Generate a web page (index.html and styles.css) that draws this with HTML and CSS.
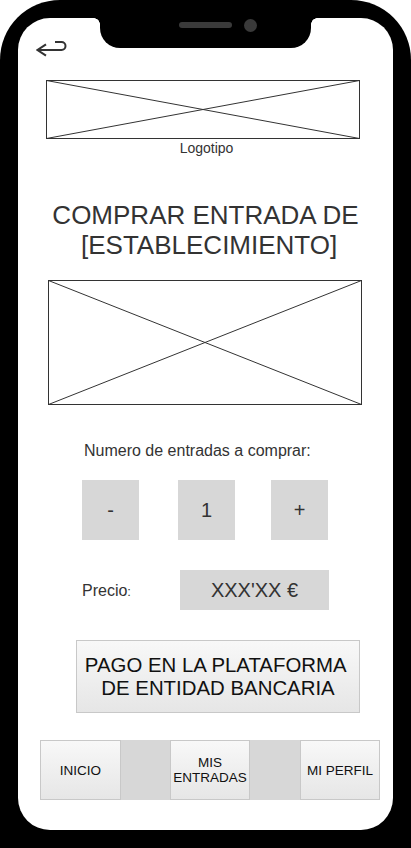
FILE: index.html
```html
<!DOCTYPE html>
<html lang="es">
<head>
<meta charset="utf-8">
<title>Comprar entrada</title>
<link rel="stylesheet" href="styles.css">
</head>
<body>
<div class="phone">
  <div class="notch"><span class="speaker"></span><span class="camera"></span></div>
  <div class="screen">
    <div class="topbar">
      <svg class="back" width="32" height="20" viewBox="36 39 32 20">
        <path d="M55 42 H61.5 A4 4 0 0 1 61.5 50 H37.5 M46 44.3 L37.5 50 L46 55.7" fill="none" stroke="#333" stroke-width="2" stroke-linejoin="miter"/>
      </svg>
    </div>
    <svg class="logo" width="314" height="59" viewBox="0 0 314 59">
      <rect x="0.5" y="0.5" width="313" height="58" fill="#fff" stroke="#333" stroke-width="1"/>
      <line x1="0.5" y1="0.5" x2="313.5" y2="58.5" stroke="#333" stroke-width="1"/>
      <line x1="313.5" y1="0.5" x2="0.5" y2="58.5" stroke="#333" stroke-width="1"/>
    </svg>
    <div class="logo-caption">Logotipo</div>
    <h1 class="title">COMPRAR ENTRADA DE<br> [ESTABLECIMIENTO]</h1>
    <svg class="picture" width="314" height="125" viewBox="0 0 314 125">
      <rect x="0.5" y="0.5" width="313" height="124" fill="#fff" stroke="#333" stroke-width="1"/>
      <line x1="0.5" y1="0.5" x2="313.5" y2="124.5" stroke="#333" stroke-width="1"/>
      <line x1="313.5" y1="0.5" x2="0.5" y2="124.5" stroke="#333" stroke-width="1"/>
    </svg>
    <p class="label">Numero de entradas a comprar:</p>
    <div class="counter">
      <div class="cbox c1">-</div>
      <div class="cbox c2">1</div>
      <div class="cbox c3">+</div>
    </div>
    <div class="price-row">
      <span class="price-label">Precio<span class="colon">:</span></span>
      <div class="price-box">XXX'XX €</div>
    </div>
    <div class="pay">PAGO EN LA PLATAFORMA <br>DE ENTIDAD BANCARIA</div>
    <nav class="nav">
      <div class="nav-btn w81">INICIO</div>
      <div class="nav-gap w49"></div>
      <div class="nav-btn w80">MIS<br>ENTRADAS</div>
      <div class="nav-gap w50"></div>
      <div class="nav-btn w80">MI PERFIL</div>
    </nav>
  </div>
</div>
</body>
</html>
```
FILE: styles.css
```css
html, body {
  margin: 0;
  padding: 0;
  background: #fff;
  overflow: hidden;
}
body {
  width: 411px;
  height: 848px;
  font-family: "Liberation Sans", Arial, sans-serif;
  color: #333;
}
.phone {
  position: relative;
  width: 411px;
  height: 848px;
  box-sizing: border-box;
  padding: 18px;
  background: #000;
  border-radius: 60px 60px 0 0;
}
.notch {
  position: absolute;
  left: 100px;
  top: 0;
  width: 211px;
  height: 48px;
  background: #000;
  border-radius: 0 0 20px 20px;
  z-index: 2;
}
.notch::before,
.notch::after {
  content: "";
  position: absolute;
  top: 18px;
  width: 6px;
  height: 6px;
}
.notch::before {
  left: -6px;
  background: radial-gradient(circle at 0 100%, transparent 5.5px, #000 6px);
}
.notch::after {
  right: -6px;
  background: radial-gradient(circle at 100% 100%, transparent 5.5px, #000 6px);
}
.speaker {
  position: absolute;
  left: 79px;
  top: 22px;
  width: 53px;
  height: 6px;
  border-radius: 3px;
  background: #3a3a3a;
}
.camera {
  position: absolute;
  left: 144px;
  top: 18.5px;
  width: 13px;
  height: 13px;
  border-radius: 50%;
  background: #3a3a3a;
}
.screen {
  height: 812px;
  background: #fff;
  border-radius: 32px;
  display: flex;
  flex-direction: column;
  align-items: flex-start;
}
.topbar {
  margin-top: 21px;
  padding-left: 18px;
  height: 20px;
}
.back {
  display: block;
}
.logo {
  display: block;
  margin-top: 21px;
  margin-left: 28px;
}
.logo-caption {
  align-self: stretch;
  text-align: center;
  font-size: 14px;
  line-height: 15px;
  margin-top: 2px;
  padding-left: 2px;
}
.title {
  align-self: stretch;
  margin: 44px 0 0;
  font-weight: normal;
  font-size: 26px;
  line-height: 30px;
  text-align: center;
  white-space: pre;
  color: #333;
}
.picture {
  display: block;
  margin-top: 20px;
  margin-left: 30px;
}
.label {
  margin: 37px 0 0 66px;
  font-size: 16px;
  line-height: 18px;
}
.counter {
  margin-top: 20px;
  margin-left: 64px;
  display: grid;
  grid-template-columns: 57px 39px 57px 36px 57px;
  height: 60px;
}
.cbox {
  background: #d7d7d7;
  display: flex;
  align-items: center;
  justify-content: center;
  font-size: 20px;
}
.c1 { grid-column: 1; }
.c2 { grid-column: 3; }
.c3 { grid-column: 5; }
.price-row {
  margin-top: 30px;
  margin-left: 64px;
  display: flex;
  align-items: center;
  height: 40px;
}
.price-label {
  width: 98px;
  font-size: 16px;
  padding-top: 2px;
}
.colon {
  font-size: 13px;
}
.price-box {
  width: 149px;
  height: 40px;
  background: #d7d7d7;
  display: flex;
  align-items: center;
  justify-content: center;
  font-size: 20px;
}
.pay {
  margin-top: 30px;
  margin-left: 58px;
  width: 284px;
  height: 73px;
  box-sizing: border-box;
  border: 1px solid #c8c8c8;
  background: linear-gradient(#f8f8f8, #e6e6e6);
  display: flex;
  align-items: center;
  justify-content: center;
  text-align: center;
  white-space: pre;
  font-size: 20.4px;
  line-height: 23px;
  color: #111;
}
.nav {
  margin-top: 27px;
  margin-left: 22px;
  display: flex;
  height: 60px;
}
.nav-btn {
  box-sizing: border-box;
  border: 1px solid #c8c8c8;
  background: linear-gradient(#f8f8f8, #e6e6e6);
  display: flex;
  align-items: center;
  justify-content: center;
  text-align: center;
  font-size: 13.5px;
  line-height: 15px;
  color: #111;
}
.nav-gap {
  background: #d7d7d7;
}
.w81 { width: 81px; }
.w80 { width: 80px; }
.w49 { width: 49px; }
.w50 { width: 50px; }
```
